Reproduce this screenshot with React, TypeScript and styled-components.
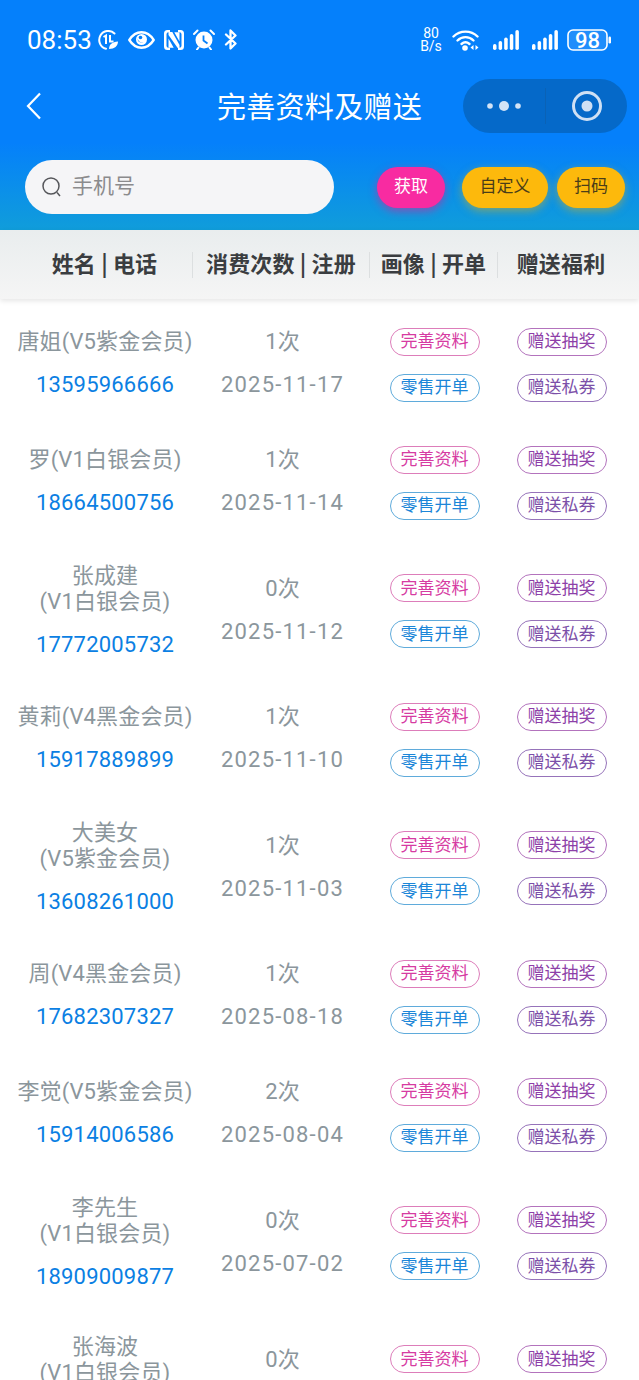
import styled, { createGlobalStyle } from 'styled-components'

const GlobalStyle = createGlobalStyle`
  html, body {
    margin: 0;
    padding: 0;
    height: 1380px;
    overflow: hidden;
    background: #fff;
    font-family: Roboto, "Noto Sans CJK SC", sans-serif;
  }
`

const Page = styled.div`
  width: 639px;
  height: 1380px;
  overflow: hidden;
  background: #fff;
`

const Header = styled.header`
  height: 230px;
  background: linear-gradient(180deg, #0580fb 0%, #0580fb 62%, #109dda 100%);
  color: #fff;
`

const StatusBar = styled.div`
  height: 79px;
  display: flex;
  justify-content: space-between;
  align-items: center;
  padding: 0 28px 0 27px;
`

const StatusGroup = styled.div`
  display: flex;
  align-items: center;
  gap: ${(p: { $gap: number }) => p.$gap}px;
`

const Clock = styled.span`
  font-size: 26px;
  line-height: 30px;
  margin-right: -3px;
`

const Speed = styled.div`
  font-size: 14px;
  line-height: 13px;
  text-align: center;
  width: 22px;
  margin-right: -3px;
`

const BatteryWrap = styled.div`
  display: flex;
  margin-left: -4px;
`

const NavBar = styled.div`
  height: 54px;
  display: grid;
  grid-template-columns: 1fr auto 1fr;
  align-items: center;
  padding: 0 12px;
`

const BackSlot = styled.div`
  display: flex;
  padding-left: 14px;
`

const NavTitle = styled.h1`
  margin: 0 0 2px;
  font-size: 29px;
  line-height: 52px;
  font-weight: 400;
  letter-spacing: 0.3px;
  font-family: "Noto Sans CJK SC", sans-serif;
`

const Capsule = styled.div`
  justify-self: end;
  width: 164px;
  height: 54px;
  border-radius: 27px;
  background: #0569c9;
  display: grid;
  grid-template-columns: 82px 1px 81px;
  align-items: center;
  justify-items: center;
`

const CapsuleLine = styled.div`
  width: 1px;
  height: 36px;
  background: #0a62b6;
`

const SearchRow = styled.div`
  display: flex;
  align-items: center;
  height: 54px;
  margin-top: 27px;
  padding: 0 14px 0 25px;
`

const SearchBox = styled.div`
  width: 309px;
  height: 54px;
  box-sizing: border-box;
  border-radius: 27px;
  background: #f5f5f7;
  display: flex;
  align-items: center;
  gap: 11px;
  padding-left: 17px;
  margin-right: 43px;
  color: #8b8b8d;
  font-size: 21px;
  font-family: "Noto Sans CJK SC", sans-serif;
`

const Placeholder = styled.span`
  margin-bottom: 6px;
`

const ActionButton = styled.button<{ $w: number; $bg: string; $fg: string; $glow: string; $mr: number }>`
  width: ${p => p.$w}px;
  height: 41px;
  margin-right: ${p => p.$mr}px;
  border: none;
  padding: 0 0 5px;
  border-radius: 21px;
  background: ${p => p.$bg};
  color: ${p => p.$fg};
  box-shadow: 0 3px 8px ${p => p.$glow};
  font-size: 17px;
  font-family: "Noto Sans CJK SC", sans-serif;
`

const TableHead = styled.div`
  height: 69px;
  display: grid;
  grid-template-columns: 176px 177px 128px 126px;
  padding: 0 15px 0 17px;
  align-items: center;
  background: linear-gradient(180deg, #e9edee 0%, #f5f5f5 100%);
  box-shadow: 0 2px 5px rgba(0, 0, 0, 0.1);
  position: relative;
`

const HeadCell = styled.div<{ $line?: boolean }>`
  height: 26px;
  line-height: 26px;
  text-align: center;
  font-size: 22px;
  font-weight: 700;
  color: #3a3d40;
  white-space: nowrap;
  font-family: "Noto Sans CJK SC", sans-serif;
  letter-spacing: 0.15px;
  border-right: ${p => (p.$line ? '1px solid #dcdfe0' : 'none')};
  & > span {
    position: relative;
    top: -3px;
  }
`

const List = styled.div`
  padding-top: 5px;
`

const Row = styled.div<{ $tall: boolean }>`
  height: ${p => (p.$tall ? 139 : 118)}px;
  display: grid;
  grid-template-columns: 176px 177px 128px 126px;
  padding: 0 15px 0 17px;
  align-items: center;
  text-align: center;
`

const TextCell = styled.div`
  display: flex;
  flex-direction: column;
  align-items: center;
  gap: 17px;
  margin-top: 1px;
`

const CountCell = styled(TextCell)`
  padding-left: 2px;
`

const Muted = styled.div<{ $wide?: boolean }>`
  font-size: 22px;
  line-height: 26px;
  color: #8b969c;
  white-space: pre-line;
  letter-spacing: ${p => (p.$wide ? 1.2 : 0.15)}px;
  font-family: Roboto, "Noto Sans CJK SC", sans-serif;
`

const Phone = styled.div`
  font-size: 22px;
  line-height: 26px;
  letter-spacing: 0.2px;
  color: #0b7fe3;
`

const ButtonCell = styled.div`
  display: flex;
  flex-direction: column;
  align-items: center;
  gap: 18px;
  margin-top: 3px;
  padding-left: 1px;
`

const Pill = styled.button<{ $fg: string; $line: string }>`
  width: 90px;
  height: 28px;
  box-sizing: border-box;
  padding: 0 0 3px;
  border: 1.5px solid ${p => p.$line};
  border-radius: 14px;
  background: #fff;
  color: ${p => p.$fg};
  font-size: 17px;
  line-height: 22px;
  font-family: "Noto Sans CJK SC", sans-serif;
`

type Member = { name: string; phone: string; times: string; date: string; tall?: boolean }

const members: Member[] = [
  { name: '唐姐(V5紫金会员)', phone: '13595966666', times: '1次', date: '2025-11-17' },
  { name: '罗(V1白银会员)', phone: '18664500756', times: '1次', date: '2025-11-14' },
  { name: '张成建\n(V1白银会员)', phone: '17772005732', times: '0次', date: '2025-11-12', tall: true },
  { name: '黄莉(V4黑金会员)', phone: '15917889899', times: '1次', date: '2025-11-10' },
  { name: '大美女\n(V5紫金会员)', phone: '13608261000', times: '1次', date: '2025-11-03', tall: true },
  { name: '周(V4黑金会员)', phone: '17682307327', times: '1次', date: '2025-08-18' },
  { name: '李觉(V5紫金会员)', phone: '15914006586', times: '2次', date: '2025-08-04' },
  { name: '李先生\n(V1白银会员)', phone: '18909009877', times: '0次', date: '2025-07-02', tall: true },
  { name: '张海波\n(V1白银会员)', phone: '13900000000', times: '0次', date: '2025-07-01', tall: true }
]

const DataIcon = () => (
  <svg width='21' height='20' viewBox='0 0 21 20' fill='none' stroke='#fff'>
    <path d='M16.500 3.500A9 9 0 1 0 8 18.700' strokeWidth='2' strokeLinecap='round' />
    <path d='M11 19c0-4.500 3-7 9-7.500 0 4.500-3.500 7.500-9 7.500z' fill='#fff' stroke='none' />
    <path d='M5.500 7 8 5.500V14M12 5v6.500h3.500' strokeWidth='2' />
  </svg>
)

const EyeIcon = () => (
  <svg width='27' height='18' viewBox='0 0 27 18' fill='none'>
    <path d='M1.300 9C4.500 4 8.800 1.300 13.500 1.300S22.500 4 25.700 9c-3.200 5-7.500 7.700-12.200 7.700S4.500 14 1.300 9z' stroke='#fff' strokeWidth='2.400' strokeLinejoin='round' />
    <circle cx='13.500' cy='8.500' r='5.500' fill='#fff' />
    <path d='M9.500 7.500a4 4 0 0 0 6 3.500 4.500 4.500 0 0 1-6-3.500z' fill='#0580fb' />
    <circle cx='12.500' cy='6.500' r='1.800' fill='#0580fb' />
  </svg>
)

const NfcIcon = () => (
  <svg width='20' height='20' viewBox='0 0 20 20' fill='#fff'>
    <path d='M6 0H3.500A3.500 3.500 0 0 0 0 3.500v13A3.500 3.500 0 0 0 3.500 20H6v-2.200H4.500a2 2 0 0 1-2-2V4.200a2 2 0 0 1 2-2H6z' />
    <path d='M14 20h2.500a3.500 3.500 0 0 0 3.500-3.500v-13A3.500 3.500 0 0 0 16.500 0H14v2.200h1.500a2 2 0 0 1 2 2v11.600a2 2 0 0 1-2 2H14z' />
    <path d='M4.500 2h3.800l7.200 13v3h-1.800L4.500 5z' />
    <path d='M4.500 8.500l5.200 9.300H4.500zM15.500 11.500 10.300 2.200h5.200z' />
  </svg>
)

const AlarmIcon = () => (
  <svg width='22' height='21' viewBox='0 0 22 21' fill='none' stroke='#fff'>
    <circle cx='11' cy='11' r='8.500' fill='#fff' stroke='none' />
    <path d='M10.500 6.500v5l4 3' stroke='#0580fb' strokeWidth='1.800' />
    <path d='M1 5 4.500 1.500M21 5 17.500 1.500' strokeWidth='2' strokeLinecap='round' />
    <path d='M5.500 18.500 4 20.500M16.500 18.500l1.500 2' strokeWidth='2' strokeLinecap='round' />
  </svg>
)

const BluetoothIcon = () => (
  <svg width='14' height='21' viewBox='0 0 14 21' fill='none' stroke='#fff' strokeWidth='2.300'>
    <path d='M2 5.500 11.500 14.500 6.500 19.500V1.500l5 5L2 15.500' strokeLinejoin='round' strokeLinecap='round' />
  </svg>
)

const WifiIcon = () => (
  <svg width='28' height='22' viewBox='0 0 28 22' fill='none' stroke='#fff' strokeLinecap='round'>
    <path d='M1.500 7.500C8 1 19 1 25.500 7.500' strokeWidth='2.400' />
    <path d='M5.500 11.500C10 7 17 7 21.500 11.500' strokeWidth='2.400' />
    <path d='M9.500 15c2.500-2.200 5.500-2.200 8 0' strokeWidth='2.400' />
    <circle cx='13' cy='19' r='2.800' fill='#fff' stroke='none' />
    <path d='M21.500 16v5l-3-2.500zM23.500 16v5l3-2.500z' fill='#fff' stroke='none' />
  </svg>
)

const SignalIcon = () => (
  <svg width='26' height='20' viewBox='0 0 26 20' fill='#fff'>
    <rect x='0' y='14' width='3.500' height='6' rx='1.700' />
    <rect x='5.600' y='11' width='3.500' height='9' rx='1.700' />
    <rect x='11.200' y='7.500' width='3.500' height='12.500' rx='1.700' />
    <rect x='16.800' y='4' width='3.500' height='16' rx='1.700' />
    <rect x='22.400' y='0' width='3.500' height='20' rx='1.700' />
  </svg>
)

const BatteryIcon = () => (
  <svg width='44' height='22' viewBox='0 0 44 22' fill='none'>
    <rect x='1' y='1' width='39' height='20' rx='5' stroke='#fff' strokeWidth='1.600' fill='#1f8efb' />
    <rect x='41.500' y='7.500' width='2.500' height='7' rx='1.200' fill='#fff' />
    <text x='20.500' y='18.500' textAnchor='middle' fill='#fff' fontSize='22' fontWeight='500' fontFamily='Roboto'>98</text>
  </svg>
)

const BackIcon = () => (
  <svg width='15' height='28' viewBox='0 0 15 28' fill='none' stroke='#fff' strokeWidth='2.200'>
    <path d='M14 1.500 2 14l12 12.500' />
  </svg>
)

const MoreIcon = () => (
  <svg width='34' height='10' viewBox='0 0 34 10' fill='#d3e3f6'>
    <circle cx='3' cy='5' r='2.800' />
    <circle cx='17' cy='5' r='5' />
    <circle cx='31' cy='5' r='2.800' />
  </svg>
)

const TargetIcon = () => (
  <svg width='30' height='30' viewBox='0 0 30 30'>
    <circle cx='15' cy='15' r='13.500' fill='none' stroke='#cfe0f4' strokeWidth='3' />
    <circle cx='15' cy='15' r='5.500' fill='#cfe0f4' />
  </svg>
)

const SearchIcon = () => (
  <svg width='19' height='20' viewBox='0 0 19 20' fill='none' stroke='#55565a' strokeWidth='1.500'>
    <circle cx='9' cy='9' r='8' />
    <path d='M15 15.500l3 3.500' />
  </svg>
)

function App () {
  return (
    <Page>
      <GlobalStyle />
      <Header>
        <StatusBar>
          <StatusGroup $gap={9}>
            <Clock>08:53</Clock>
            <DataIcon />
            <EyeIcon />
            <NfcIcon />
            <AlarmIcon />
            <BluetoothIcon />
          </StatusGroup>
          <StatusGroup $gap={13}>
            <Speed>80<br />B/s</Speed>
            <WifiIcon />
            <SignalIcon />
            <SignalIcon />
            <BatteryWrap><BatteryIcon /></BatteryWrap>
          </StatusGroup>
        </StatusBar>
        <NavBar>
          <BackSlot><BackIcon /></BackSlot>
          <NavTitle>完善资料及赠送</NavTitle>
          <Capsule>
            <MoreIcon />
            <CapsuleLine />
            <TargetIcon />
          </Capsule>
        </NavBar>
        <SearchRow>
          <SearchBox>
            <SearchIcon />
            <Placeholder>手机号</Placeholder>
          </SearchBox>
          <ActionButton $w={68} $mr={17} $bg='#f82ba1' $fg='#fff' $glow='rgba(190, 50, 160, 0.7)'>获取</ActionButton>
          <ActionButton $w={86} $mr={9} $bg='#fdb90c' $fg='#4a3d18' $glow='rgba(170, 170, 70, 0.7)'>自定义</ActionButton>
          <ActionButton $w={68} $mr={0} $bg='#fdb90c' $fg='#4a3d18' $glow='rgba(170, 170, 70, 0.7)'>扫码</ActionButton>
        </SearchRow>
      </Header>
      <TableHead>
        <HeadCell $line><span>姓名 | 电话</span></HeadCell>
        <HeadCell $line><span>消费次数 | 注册</span></HeadCell>
        <HeadCell $line><span>画像 | 开单</span></HeadCell>
        <HeadCell><span>赠送福利</span></HeadCell>
      </TableHead>
      <List>
        {members.map(m => (
          <Row key={m.phone} $tall={!!m.tall}>
            <TextCell>
              <Muted>{m.name}</Muted>
              <Phone>{m.phone}</Phone>
            </TextCell>
            <CountCell>
              <Muted>{m.times}</Muted>
              <Muted $wide>{m.date}</Muted>
            </CountCell>
            <ButtonCell>
              <Pill $fg='#d63ba2' $line='#dd7dba'>完善资料</Pill>
              <Pill $fg='#1c86d8' $line='#5fabdb'>零售开单</Pill>
            </ButtonCell>
            <ButtonCell>
              <Pill $fg='#8d3fa8' $line='#b373bd'>赠送抽奖</Pill>
              <Pill $fg='#7b4fa8' $line='#9673ba'>赠送私券</Pill>
            </ButtonCell>
          </Row>
        ))}
      </List>
    </Page>
  )
}

export default App
